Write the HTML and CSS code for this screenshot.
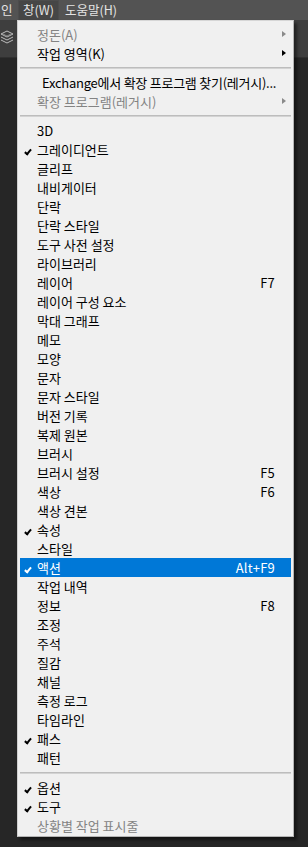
FILE: index.html
```html
<!DOCTYPE html>
<html>
	<head>
		<meta charset="utf-8">
		<meta name="viewport" content="width=device-width, initial-scale=1.0">
		<title>창 메뉴</title>
		<link rel="stylesheet" href="styles.css">
	</head>
	<body>

		<div class="menubar">
			<span class="mb-item first">인</span>
			<span class="mb-item open">창(W)</span>
			<span class="mb-item">도움말(H)</span>
		</div>

		<div class="toolbar">
			<svg class="tool-icon" width="14" height="22" viewBox="0 0 14 22">
				<path d="M1 7 L7 4 L13 7 L7 10 Z" fill="none" stroke="#bdbdbd" stroke-width="1"/>
				<path d="M1 10 L7 13 L13 10" fill="none" stroke="#bdbdbd" stroke-width="1"/>
				<path d="M1 13 L7 16 L13 13" fill="none" stroke="#bdbdbd" stroke-width="1"/>
				<path d="M3 7 L7 9 L11 7" fill="none" stroke="#8a8a8a" stroke-width="1"/>
			</svg>
		</div>

		<!-- 창 메뉴 드롭다운 -->
		<div class="menu">
			<ul>
				<li class="disabled">정돈(A)<i class="arrow"></i></li>
				<li>작업 영역(K)<i class="arrow"></i></li>
				<li class="sep sep-a"></li>
				<li class="indent">Exchange에서 확장 프로그램 찾기(레거시)...</li>
				<li class="disabled">확장 프로그램(레거시)<i class="arrow"></i></li>
				<li class="sep sep-a"></li>
				<li>3D</li>
				<li class="checked">그레이디언트</li>
				<li>글리프</li>
				<li>내비게이터</li>
				<li>단락</li>
				<li>단락 스타일</li>
				<li>도구 사전 설정</li>
				<li>라이브러리</li>
				<li>레이어<span class="key">F7</span></li>
				<li>레이어 구성 요소</li>
				<li>막대 그래프</li>
				<li>메모</li>
				<li>모양</li>
				<li>문자</li>
				<li>문자 스타일</li>
				<li>버전 기록</li>
				<li>복제 원본</li>
				<li>브러시</li>
				<li>브러시 설정<span class="key">F5</span></li>
				<li>색상<span class="key">F6</span></li>
				<li>색상 견본</li>
				<li class="checked">속성</li>
				<li>스타일</li>
				<li class="checked active">액션<span class="key">Alt+F9</span></li>
				<li>작업 내역</li>
				<li>정보<span class="key">F8</span></li>
				<li>조정</li>
				<li>주석</li>
				<li>질감</li>
				<li>채널</li>
				<li>측정 로그</li>
				<li>타임라인</li>
				<li class="checked">패스</li>
				<li>패턴</li>
				<li class="sep sep-b"></li>
				<li class="checked">옵션</li>
				<li class="checked">도구</li>
				<li class="disabled">상황별 작업 표시줄</li>
			</ul>
		</div>

	</body>
</html>
```

FILE: styles.css
```css
body{
	margin: 0;
	background-color: #262626;
	font-family: "Noto Sans CJK KR", "Noto Sans", sans-serif;
	font-size: 12px;
	height: 847px;
	overflow: hidden;
}

/* 상단 메뉴바 */
.menubar{
	display: flex;
	height: 20px;
	background-color: #535353;
	color: #e4e4e4;
	line-height: 19px;
	font-size: 12.5px;
}
.mb-item{
	padding: 0 6px;
	white-space: nowrap;
}
.mb-item.first{
	width: 18px;
	box-sizing: border-box;
	padding: 0 0 0 1px;
}
.mb-item.open{
	width: 41px;
	box-sizing: border-box;
	padding: 0;
	text-align: center;
	background-color: #464646;
	border: 1px solid #4c4c4c;
	border-bottom: 0;
	line-height: 18px;
}

.toolbar{
	height: 37px;
	background-color: #3e3e3e;
	border-bottom: 1px solid #303030;
}
.tool-icon{
	display: block;
	padding-top: 7px;
}

/* 드롭다운 */
.menu{
	position: absolute;
	top: 20px;
	left: 17px;
	width: 275px;
	background-color: #f0f0f0;
	border: 1px solid #b4b4b4;
	border-left-color: #cfcfcf;
	border-top-color: #d6d6d6;
	box-shadow: 3px 3px 3px rgba(0, 0, 0, 0.45);
	color: #000;
	font-size: 13px;
}
.menu ul{
	margin: 0;
	padding: 4px 2px 1px;
	list-style: none;
}
.menu li{
	position: relative;
	height: 19px;
	line-height: 19px;
	padding-left: 17px;
	white-space: nowrap;
}
.menu li.indent{
	padding-left: 22px;
	letter-spacing: -0.25px;
}
.menu li.disabled{
	color: #838383;
}
.menu li.active{
	background-color: #0078d7;
	color: #fff;
}

/* 체크 표시 */
.menu li.checked::before{
	content: '';
	position: absolute;
	left: 6px;
	top: 8px;
	width: 2px;
	height: 5px;
	border: solid #000;
	border-width: 0 2px 2px 0;
	transform: rotate(40deg);
}
.menu li.active.checked::before{
	border-color: #fff;
}

.key{
	position: absolute;
	right: 16px;
	top: 0;
	letter-spacing: 0.2px;
}

/* 하위 메뉴 화살표 */
.arrow{
	position: absolute;
	right: 5px;
	top: 6px;
	width: 0;
	height: 0;
	border-top: 3.5px solid transparent;
	border-bottom: 3.5px solid transparent;
	border-left: 4px solid #000;
}
.disabled .arrow{
	border-left-color: #8a8a8a;
}

.menu li.sep{
	height: 10px;
	padding: 0;
}
.menu li.sep::after{
	content: '';
	position: absolute;
	left: 0;
	right: 0;
	top: 4px;
	height: 1px;
	background-color: #bdbdbd;
	border-bottom: 1px solid #d3d3d3;
}
.menu li.sep-b{
	height: 11px;
}
.menu li.sep-b::after{
	top: 5px;
}
```
